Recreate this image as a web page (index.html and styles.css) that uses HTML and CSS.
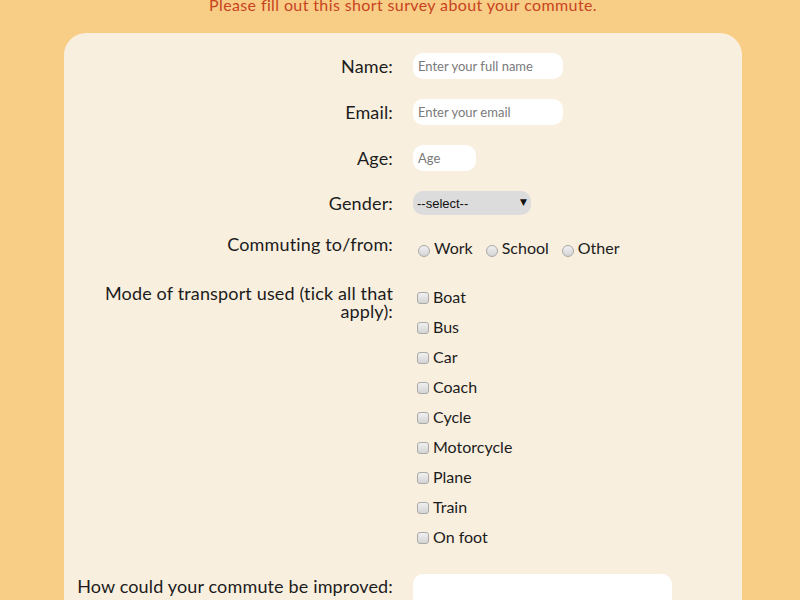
FILE: index.html
```html
<!DOCTYPE html>
<html lang="en">
<head>
<meta charset="utf-8">
<title>Commute survey</title>
<link rel="stylesheet" href="styles.css">
</head>
<body>
<div class="page">
  <p class="intro">Please fill out this short survey about your commute.</p>
  <form class="survey">
    <div class="row">
      <label class="lbl" for="name">Name:</label>
      <div class="field"><input class="text w-name" id="name" type="text" placeholder="Enter your full name"></div>
    </div>
    <div class="row">
      <label class="lbl" for="email">Email:</label>
      <div class="field"><input class="text w-name" id="email" type="email" placeholder="Enter your email"></div>
    </div>
    <div class="row">
      <label class="lbl" for="age">Age:</label>
      <div class="field"><input class="text w-age" id="age" type="text" placeholder="Age"></div>
    </div>
    <div class="row">
      <label class="lbl" for="gender">Gender:</label>
      <div class="field">
        <span class="select-wrap">
          <select id="gender" class="select"><option>--select--</option><option>Female</option><option>Male</option><option>Other</option></select>
          <span class="arrow">▼</span>
        </span>
      </div>
    </div>
    <div class="row row-top row-commute">
      <span class="lbl">Commuting to/from:</span>
      <div class="field opts radios">
        <label class="opt"><input class="radio" type="radio" name="to">Work</label>
        <label class="opt"><input class="radio" type="radio" name="to">School</label>
        <label class="opt"><input class="radio" type="radio" name="to">Other</label>
      </div>
    </div>
    <div class="row row-top row-mode">
      <span class="lbl">Mode of transport used (tick all that apply):</span>
      <div class="field opts checks">
        <label class="opt"><input class="check" type="checkbox">Boat</label>
        <label class="opt"><input class="check" type="checkbox">Bus</label>
        <label class="opt"><input class="check" type="checkbox">Car</label>
        <label class="opt"><input class="check" type="checkbox">Coach</label>
        <label class="opt"><input class="check" type="checkbox">Cycle</label>
        <label class="opt"><input class="check" type="checkbox">Motorcycle</label>
        <label class="opt"><input class="check" type="checkbox">Plane</label>
        <label class="opt"><input class="check" type="checkbox">Train</label>
        <label class="opt"><input class="check" type="checkbox">On foot</label>
      </div>
    </div>
    <div class="row row-top">
      <label class="lbl lbl-area" for="improve">How could your commute be improved:</label>
      <div class="field"><textarea id="improve" class="area"></textarea></div>
    </div>
  </form>
</div>
</body>
</html>
```

FILE: styles.css
```css
* { box-sizing: border-box; }

html, body {
  margin: 0;
  background: #f8cd86;
  font-family: Lato, "Open Sans", sans-serif;
  color: #1c1c1c;
  overflow: hidden;
}

.page {
  width: 678px;
  margin-left: 64px;
}

.intro {
  margin: -5px 0 18px;
  font-size: 16px;
  line-height: 20px;
  letter-spacing: 0.38px;
  text-align: center;
  color: #c8431f;
}

.survey {
  background: #f9efdf;
  border-radius: 22px;
  padding: 20px 12px 40px;
}

.row {
  display: grid;
  grid-template-columns: 317px 1fr;
  column-gap: 20px;
  align-items: center;
  margin-bottom: 20px;
}

.row-top { align-items: start; }
.row-commute { margin-bottom: 21px; }
.row-mode { margin-bottom: 22px; }

.lbl {
  font-size: 18px;
  line-height: 18px;
  letter-spacing: 0.15px;
  text-align: right;
}

.lbl-area { padding-top: 3px; }

.text {
  display: block;
  height: 26px;
  border: none;
  border-radius: 10px;
  background: #fff;
  padding: 0 5px;
  font-family: Lato, sans-serif;
  font-size: 13px;
  color: #333;
  outline: none;
}
.text::placeholder { color: #7a7a7a; }
.w-name { width: 150px; }
.w-age { width: 63px; }

.select-wrap {
  position: relative;
  display: inline-block;
  width: 118px;
  height: 24px;
  vertical-align: top;
}
.select {
  appearance: none;
  -webkit-appearance: none;
  display: block;
  width: 118px;
  height: 24px;
  border: none;
  border-radius: 10px;
  background: #dcdcdc;
  padding: 0 4px;
  font-family: "Liberation Sans", Arial, sans-serif;
  font-size: 13px;
  color: #111;
  outline: none;
}
.arrow {
  position: absolute;
  right: 4px;
  top: 5px;
  font-family: "DejaVu Sans", sans-serif;
  font-size: 9px;
  line-height: 12px;
  color: #111;
  pointer-events: none;
}

.opts {
  margin-top: -2px;
  font-size: 16px;
  line-height: 30px;
}
.radios {
  display: flex;
  margin-top: -2px;
}
.radios .opt { margin-right: 8px; }
.checks .opt { display: block; }

.opt { white-space: nowrap; }

.radio, .check {
  appearance: none;
  -webkit-appearance: none;
  display: inline-block;
  margin: 0;
  border: 1px solid #a9a9a9;
  background: linear-gradient(#f0f0f0, #d4d4d4);
}
.radio {
  width: 12px;
  height: 12px;
  border-radius: 50%;
  margin: 0 4px 0 5px;
  vertical-align: -3px;
}
.check {
  width: 12px;
  height: 12px;
  border-radius: 3px;
  margin: 0 4px 0 4px;
  vertical-align: -1px;
}

.area {
  display: block;
  width: 259px;
  height: 60px;
  border: none;
  border-radius: 10px;
  background: #fff;
  resize: none;
  outline: none;
}
```
